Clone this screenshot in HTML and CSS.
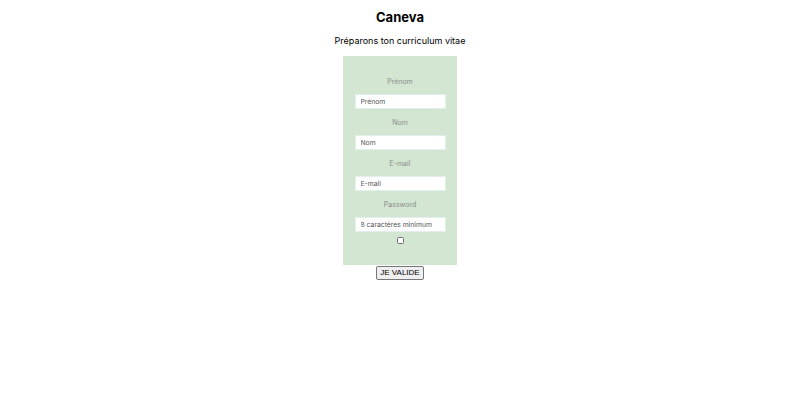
FILE: index.html
```html
<!DOCTYPE html>
<html lang="fr">
<head>
<meta charset="utf-8">
<title>Caneva</title>
<link rel="stylesheet" href="styles.css">
</head>
<body>
<main class="page">
  <h1 class="title">Caneva</h1>
  <p class="subtitle">Préparons ton curriculum vitae</p>
  <form class="form">
    <div class="card">
      <label class="label" for="prenom">Prénom</label>
      <input class="field" id="prenom" type="text" placeholder="Prénom">
      <label class="label" for="nom">Nom</label>
      <input class="field" id="nom" type="text" placeholder="Nom">
      <label class="label" for="email">E-mail</label>
      <input class="field" id="email" type="email" placeholder="E-mail">
      <label class="label" for="pwd">Password</label>
      <input class="field" id="pwd" type="password" placeholder="8 caractères minimum">
      <input class="check" type="checkbox">
    </div>
    <button class="submit" type="button">JE VALIDE</button>
  </form>
</main>
</body>
</html>
```

FILE: styles.css
```css
html, body {
  margin: 0;
  padding: 0;
  background: #ffffff;
}
body {
  font-family: Inter, "Liberation Sans", sans-serif;
  color: #000;
}
.page {
  display: flex;
  flex-direction: column;
  align-items: center;
}
.title {
  margin: 9px 0 0;
  font-size: 13px;
  line-height: 17px;
  font-weight: 700;
}
.subtitle {
  margin: 8px 0 0;
  font-size: 9px;
  line-height: 13px;
}
.form {
  margin-top: 9px;
  display: flex;
  flex-direction: column;
  align-items: center;
}
.card {
  width: 114px;
  height: 209px;
  box-sizing: border-box;
  background: #d2e6d2;
  display: flex;
  flex-direction: column;
  align-items: center;
  padding-top: 21px;
}
.label {
  font-size: 7px;
  line-height: 10px;
  color: #8c8c8c;
  margin-bottom: 7px;
}
.field {
  width: 91px;
  height: 15px;
  box-sizing: border-box;
  border: 1px solid #e2efee;
  background: #fff;
  padding: 0 5px;
  font-family: inherit;
  font-size: 6.8px;
  margin: 0 0 9px;
  outline: none;
}
.field::placeholder {
  color: #555;
}
.check {
  width: 7px;
  height: 7px;
  margin: -4px 0 0;
  appearance: none;
  -webkit-appearance: none;
  border: 1px solid #6f6f6f;
  border-radius: 1.5px;
  background: #fff;
  box-sizing: border-box;
}
.submit {
  margin-top: 1px;
  font-family: "Liberation Sans", Arial, sans-serif;
  font-size: 8px;
  line-height: 10px;
  padding: 1px 3px;
  border: 1px solid #767676;
  border-radius: 2px;
  background: #efefef;
  color: #000;
}
```
